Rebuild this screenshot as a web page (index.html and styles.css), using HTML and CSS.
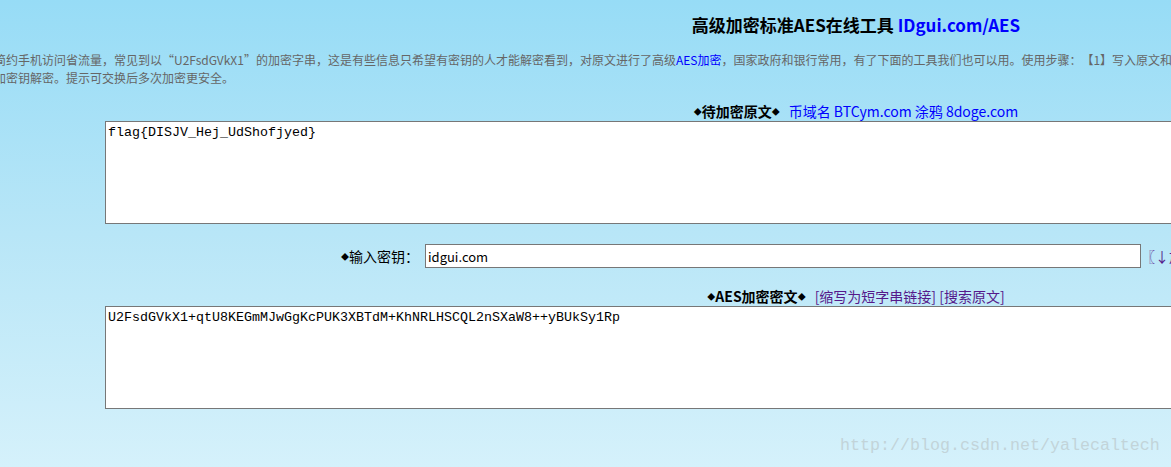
FILE: index.html
```html
<!DOCTYPE html>
<html lang="zh-CN">
<head>
<meta charset="utf-8">
<title>高级加密标准AES在线工具</title>
<link rel="stylesheet" href="styles.css">
</head>
<body>
<div class="page">
  <h1 class="title">高级加密标准AES在线工具 <a class="blue" href="#">IDgui.com/AES</a></h1>
  <p class="desc">简约手机访问省流量，常见到以“U2FsdGVkX1”的加密字串，这是有些信息只希望有密钥的人才能解密看到，对原文进行了高级<a class="blue" href="#">AES加密</a>，国家政府和银行常用，有了下面的工具我们也可以用。使用步骤：【1】写入原文和密钥，【2】点击加密按钮，【3】把密文发给对方，对方用同样的原文<br>加密钥解密。提示可交换后多次加密更安全。</p>
  <div class="label-row">
    <b class="label"><span class="dia">◆</span>待加密原文<span class="dia">◆</span></b>
    <span class="links"><a class="blue" href="#">币域名 BTCym.com</a> <a class="blue" href="#">涂鸦 8doge.com</a></span>
  </div>
  <textarea class="box">flag{DISJV_Hej_UdShofjyed}</textarea>
  <div class="key-row">
    <label class="key-label"><span class="dia">◆</span>输入密钥：</label>
    <input class="key-input" type="text" value="idgui.com">
    <a class="purple key-link" href="#">〖↓加密〗</a>
    <a class="purple key-link" href="#">〖↑解密〗</a>
  </div>
  <div class="label-row">
    <b class="label"><span class="dia">◆</span>AES加密密文<span class="dia">◆</span></b>
    <span class="links"><a class="purple" href="#">[缩写为短字串链接]</a> <a class="purple" href="#">[搜索原文]</a></span>
  </div>
  <textarea class="box">U2FsdGVkX1+qtU8KEGmMJwGgKcPUK3XBTdM+KhNRLHSCQL2nSXaW8++yBUkSy1Rp</textarea>
</div>
<div class="watermark">http://blog.csdn.net/yalecaltech</div>
</body>
</html>
```

FILE: styles.css
```css
html, body {
  margin: 0;
  padding: 0;
  overflow: hidden;
}
body {
  width: 1171px;
  height: 467px;
  position: relative;
  background: linear-gradient(to bottom, #97dcf6 0%, #b8e6f7 50%, #d5f1fb 100%);
  font-family: "Noto Sans CJK SC", "Noto Sans", sans-serif;
  color: #000;
  text-spacing-trim: space-all;
}
a {
  text-decoration: none;
}
.blue {
  color: #0000ff;
}
.purple {
  color: #551a8b;
}
.page {
  width: 1724px;
  margin-left: -6px;
  padding-top: 15px;
}
.title {
  margin: 0;
  font-size: 17px;
  line-height: 20px;
  font-weight: bold;
  text-align: center;
}
.desc {
  margin: 16px 0 0 0;
  font-size: 12px;
  line-height: 18px;
  color: #666;
  white-space: nowrap;
}
.label-row {
  display: flex;
  justify-content: center;
  align-items: center;
  gap: 9px;
  height: 20px;
  margin-top: 14px;
  font-size: 14px;
  line-height: 20px;
}
.label {
  font-weight: bold;
}
.dia {
  font-size: 8px;
  vertical-align: 2px;
}
.box {
  display: block;
  box-sizing: border-box;
  width: 1502px;
  height: 103px;
  margin: 0 auto;
  padding: 3px 2px;
  border: 1px solid #777;
  background: #fff;
  font-family: "Liberation Mono", monospace;
  font-size: 13.33px;
  line-height: 16px;
  color: #000;
  resize: none;
}
.key-row {
  display: flex;
  align-items: center;
  height: 24px;
  margin-top: 20px;
  margin-bottom: 18px;
  padding-left: 347px;
}
.key-label {
  font-size: 14px;
  margin-right: 6px;
  white-space: nowrap;
}
.key-input {
  flex: none;
  box-sizing: border-box;
  width: 716px;
  height: 24px;
  margin: 0;
  padding: 0 2px;
  border: 1px solid #777;
  background: #fff;
  font-family: "Noto Sans CJK SC", "Noto Sans", sans-serif;
  font-size: 13px;
  color: #000;
  outline: none;
}
.key-link {
  font-size: 14px;
  margin-right: 6px;
  white-space: nowrap;
}
.watermark {
  position: absolute;
  left: 840px;
  top: 436px;
  font-family: "Liberation Mono", monospace;
  font-size: 16.67px;
  line-height: 20px;
  color: #c2d4d9;
  white-space: nowrap;
}
```
